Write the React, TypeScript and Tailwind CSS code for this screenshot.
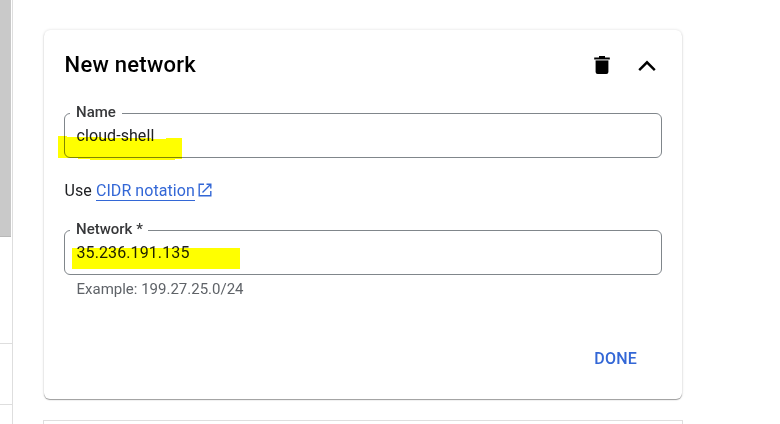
import React from "react";

type FieldProps = { label: string; value: string; legendWidth: string; valueTracking: string };

function OutlinedField({ label, value, legendWidth, valueTracking }: FieldProps) {
  return (
    <fieldset className="h-[55px] min-w-0 rounded-[6px] border border-[#80868b] pl-[5px]">
      <legend className={`h-5 whitespace-nowrap pl-1.5 text-[15px] font-medium leading-[19px] text-[#37383a] ${legendWidth}`}>
        {label}
      </legend>
      <div className={`pl-[6.5px] pt-px text-base leading-6 text-[#202124] ${valueTracking}`}>{value}</div>
    </fieldset>
  );
}

export default function App() {
  return (
    <div className="flex h-[424px] w-[780px] overflow-hidden bg-white font-['Roboto','Liberation_Sans',sans-serif]">
      <aside className="h-full w-[13px] shrink-0 border-r border-[#dedede]">
        <div className="h-[237px] w-[11px] border-b border-[#b8b8b8] bg-[#c9c9c9]" />
        <div className="mt-[106px] h-[62px] border-y border-[#dedede]" />
      </aside>

      <main className="ml-[31px] w-[638px]">
        <section className="relative mt-[30px] flex h-[369px] flex-col rounded-[6px] bg-white px-[20px] shadow-[0_1px_1px_rgba(0,0,0,0.36),0_0_3px_rgba(0,0,0,0.14)]">
          <header className="flex h-[73px] items-center justify-between">
            <h2 className="-mt-1 pl-[0.5px] text-[22px] font-medium leading-7 tracking-[0.27px] text-black">New network</h2>
            <div className="mr-[5px] flex items-center gap-[25px]">
              <svg width="20" height="20" viewBox="0 0 20 20" className="-mt-1" aria-label="Delete">
                <path d="M2.2 2.4H7V1H13V2.4H17.8V4.4H2.2Z" />
                <path d="M3.6 4.4H16.4V5.4H3.6Z" fill="#a0a0a0" />
                <path d="M3.6 5.4H16.4V17Q16.4 19 14.4 19H5.6Q3.6 19 3.6 17Z" />
              </svg>
              <svg width="20" height="20" viewBox="0 0 20 20" fill="none" stroke="black" strokeWidth="2.4" className="-mt-0.5" aria-label="Collapse">
                <path d="M2.2 14.2L10 6.3L17.8 14.2" />
              </svg>
            </div>
          </header>

          <OutlinedField label="Name" value="cloud-shell" legendWidth="w-[52px]" valueTracking="tracking-[0.08px]" />

          <p className="mt-5 flex h-6 items-center text-base text-[#202124]">
            <span className="mr-1 pl-[0.5px] pt-px tracking-[0.1px]">Use</span>
            <a className="h-[22px] border-b border-[#3367d6] leading-[23px] tracking-[0.07px] text-[#3367d6]">CIDR notation</a>
            <svg width="14" height="14" viewBox="0 0 14 14" fill="none" stroke="#3367d6" strokeWidth="1.4" className="ml-[3px]">
              <path d="M6 1.2H1.2V12.8H12.8V8M8.5 1.2H12.8V5.5M12.5 1.5L4.5 9.5" />
            </svg>
          </p>

          <div className="mt-[18px]">
            <OutlinedField label="Network *" value="35.236.191.135" legendWidth="w-[78px]" valueTracking="tracking-[0.1px]" />
          </div>
          <p className="mt-[4px] pl-[12.5px] text-[15px] leading-5 text-[#5f6368]">Example: 199.27.25.0/24</p>

          <button className="mr-[25px] mt-[50px] self-end text-base font-medium leading-5 tracking-[0.2px] text-[#3367d6]">DONE</button>

          <svg width="190" height="150" className="pointer-events-none absolute left-[14px] top-[100px] mix-blend-multiply" fill="#ffff00">
            <path d="M0 6H9V7H44V8H93V9H108V8H124V29H117V30H32V29H20V28H0Z" />
            <path d="M14 118H182V139H14Z" />
          </svg>
        </section>
        <div className="-ml-px mt-[21px] h-8 w-[640px] border border-[#dedede]" />
      </main>
    </div>
  );
}
